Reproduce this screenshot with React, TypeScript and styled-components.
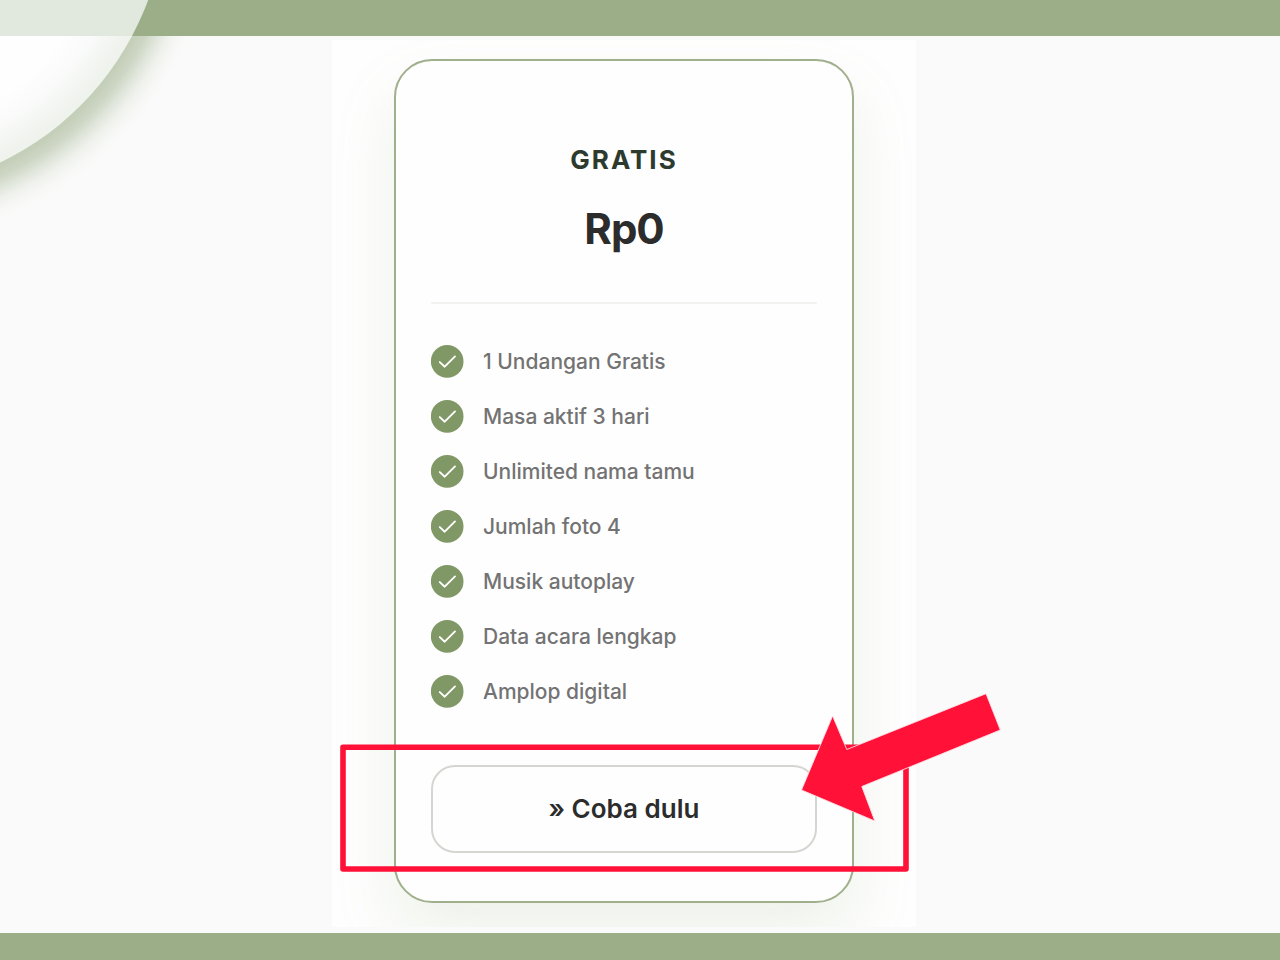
import React from "react";
import styled, { createGlobalStyle } from "styled-components";

const GlobalStyle = createGlobalStyle`
  *, *::before, *::after { box-sizing: border-box; }
  body {
    margin: 0;
    background: #fafafa;
    font-family: Inter, "Liberation Sans", sans-serif;
  }
`;

const Page = styled.div`
  position: relative;
  display: flex;
  flex-direction: column;
  min-height: 100vh;
  overflow: hidden;
`;

const Bar = styled.div<{ $size: number }>`
  flex: none;
  height: ${(p) => p.$size}px;
  background: #9cae88;
`;

const CornerDisc = styled.svg`
  position: absolute;
  top: 0;
  left: 0;
  width: 240px;
  height: 240px;
  pointer-events: none;
`;

const Main = styled.main`
  flex: 1;
  display: flex;
  justify-content: center;
  align-items: flex-start;
  padding: 4px 32px 6px 0;
`;

const Frame = styled.div`
  position: relative;
`;

const Panel = styled.section`
  width: 584px;
  padding: 19px 62px 24px;
  background: #fefefe;
  clip-path: inset(0);
`;

const Card = styled.article`
  padding: 81px 35px 48px;
  border: 2px solid #a0af8c;
  border-radius: 38px;
  background: #fefefe;
  box-shadow: 0 32px 64px rgba(130, 160, 100, 0.13);
`;

const PlanName = styled.h2`
  margin: 0;
  font-size: 26px;
  line-height: 36px;
  font-weight: 700;
  letter-spacing: 2px;
  text-align: center;
  color: #2d3a2e;
`;

const Price = styled.p`
  margin: 25px 0 0;
  font-size: 42px;
  line-height: 52px;
  font-weight: 700;
  letter-spacing: -1px;
  text-align: center;
  color: #2c2c2c;
`;

const Divider = styled.hr`
  height: 2px;
  margin: 47px 0 0;
  border: 0;
  background: #f2f3f1;
`;

const FeatureList = styled.ul`
  display: flex;
  flex-direction: column;
  gap: 22px;
  margin: 41px 0 57px;
  padding: 0;
  list-style: none;
`;

const Feature = styled.li`
  display: flex;
  align-items: center;
  gap: 19px;
  height: 33px;
  font-size: 21px;
  font-weight: 500;
  color: #737373;
`;

const CheckIcon = styled.svg`
  flex: none;
  width: 33px;
  height: 33px;
`;

const TryButton = styled.button`
  display: block;
  width: 100%;
  height: 88px;
  padding: 0;
  border: 2px solid #d4d6d1;
  border-radius: 24px;
  background: #fefefe;
  font: 600 26px/32px Inter, "Liberation Sans", sans-serif;
  color: #2c2c2c;
  cursor: pointer;
`;

const Annotations = styled.svg`
  position: absolute;
  left: 50%;
  bottom: 0;
  width: 800px;
  height: 260px;
  margin-left: -400px;
  pointer-events: none;
`;

const features = [
  "1 Undangan Gratis",
  "Masa aktif 3 hari",
  "Unlimited nama tamu",
  "Jumlah foto 4",
  "Musik autoplay",
  "Data acara lengkap",
  "Amplop digital",
];

export default function App() {
  return (
    <Page>
      <GlobalStyle />
      <Bar $size={36} />
      <Main>
        <Frame>
          <Panel>
            <Card>
              <PlanName>GRATIS</PlanName>
              <Price>Rp0</Price>
              <Divider />
              <FeatureList>
                {features.map((label) => (
                  <Feature key={label}>
                    <CheckIcon viewBox="0 0 33 33" aria-hidden="true">
                      <circle cx="16.2" cy="16.4" r="16.3" fill="#809766" />
                      <path
                        d="M8.8 17.1l4.9 4.6L24 11.4"
                        fill="none"
                        stroke="#fff"
                        strokeWidth="1.9"
                        strokeLinecap="round"
                        strokeLinejoin="round"
                      />
                    </CheckIcon>
                    {label}
                  </Feature>
                ))}
              </FeatureList>
              <TryButton type="button">» Coba dulu</TryButton>
            </Card>
          </Panel>
          <Annotations viewBox="224 667 800 260" aria-hidden="true">
            <rect
              x="343"
              y="747.3"
              width="563"
              height="121.7"
              fill="none"
              stroke="#ff1138"
              strokeWidth="5.6"
              strokeLinejoin="round"
            />
            <path
              d="M801.5 790L832.6 716L846.8 749.5L986 693.7L1000.3 730L861.8 786.5L874.8 821Z"
              fill="#ff1138"
              stroke="#ffdfe4"
              strokeWidth="0.9"
            />
          </Annotations>
        </Frame>
      </Main>
      <Bar $size={27} />
      <CornerDisc viewBox="0 0 240 240" aria-hidden="true">
        <defs>
          <radialGradient
            id="disc"
            gradientUnits="userSpaceOnUse"
            cx="-127"
            cy="-102"
            r="293.5"
          >
            <stop offset="0.8" stopColor="#fefefe" />
            <stop offset="0.89" stopColor="#f9faf9" />
            <stop offset="0.97" stopColor="#f0f3ee" />
            <stop offset="1" stopColor="#eff3ec" />
          </radialGradient>
          <radialGradient
            id="shade"
            gradientUnits="userSpaceOnUse"
            cx="-124"
            cy="-98"
            r="342"
          >
            <stop offset="0.85" stopColor="#c4cfb9" />
            <stop offset="0.88" stopColor="#cdd6c4" />
            <stop offset="0.91" stopColor="#dfe5da" />
            <stop offset="0.94" stopColor="#eff1ec" />
            <stop offset="0.97" stopColor="#f7f8f6" />
            <stop offset="1" stopColor="#fafafa" />
          </radialGradient>
          <clipPath id="below">
            <rect x="0" y="36" width="240" height="204" />
          </clipPath>
          <clipPath id="above">
            <rect x="0" y="0" width="240" height="36" />
          </clipPath>
        </defs>
        <g clipPath="url(#below)">
          <circle cx="-124" cy="-98" r="342" fill="url(#shade)" />
          <circle cx="-127" cy="-102" r="293.5" fill="url(#disc)" />
        </g>
        <circle
          cx="-127"
          cy="-102"
          r="293.5"
          fill="#e1e8dd"
          clipPath="url(#above)"
        />
      </CornerDisc>
    </Page>
  );
}
